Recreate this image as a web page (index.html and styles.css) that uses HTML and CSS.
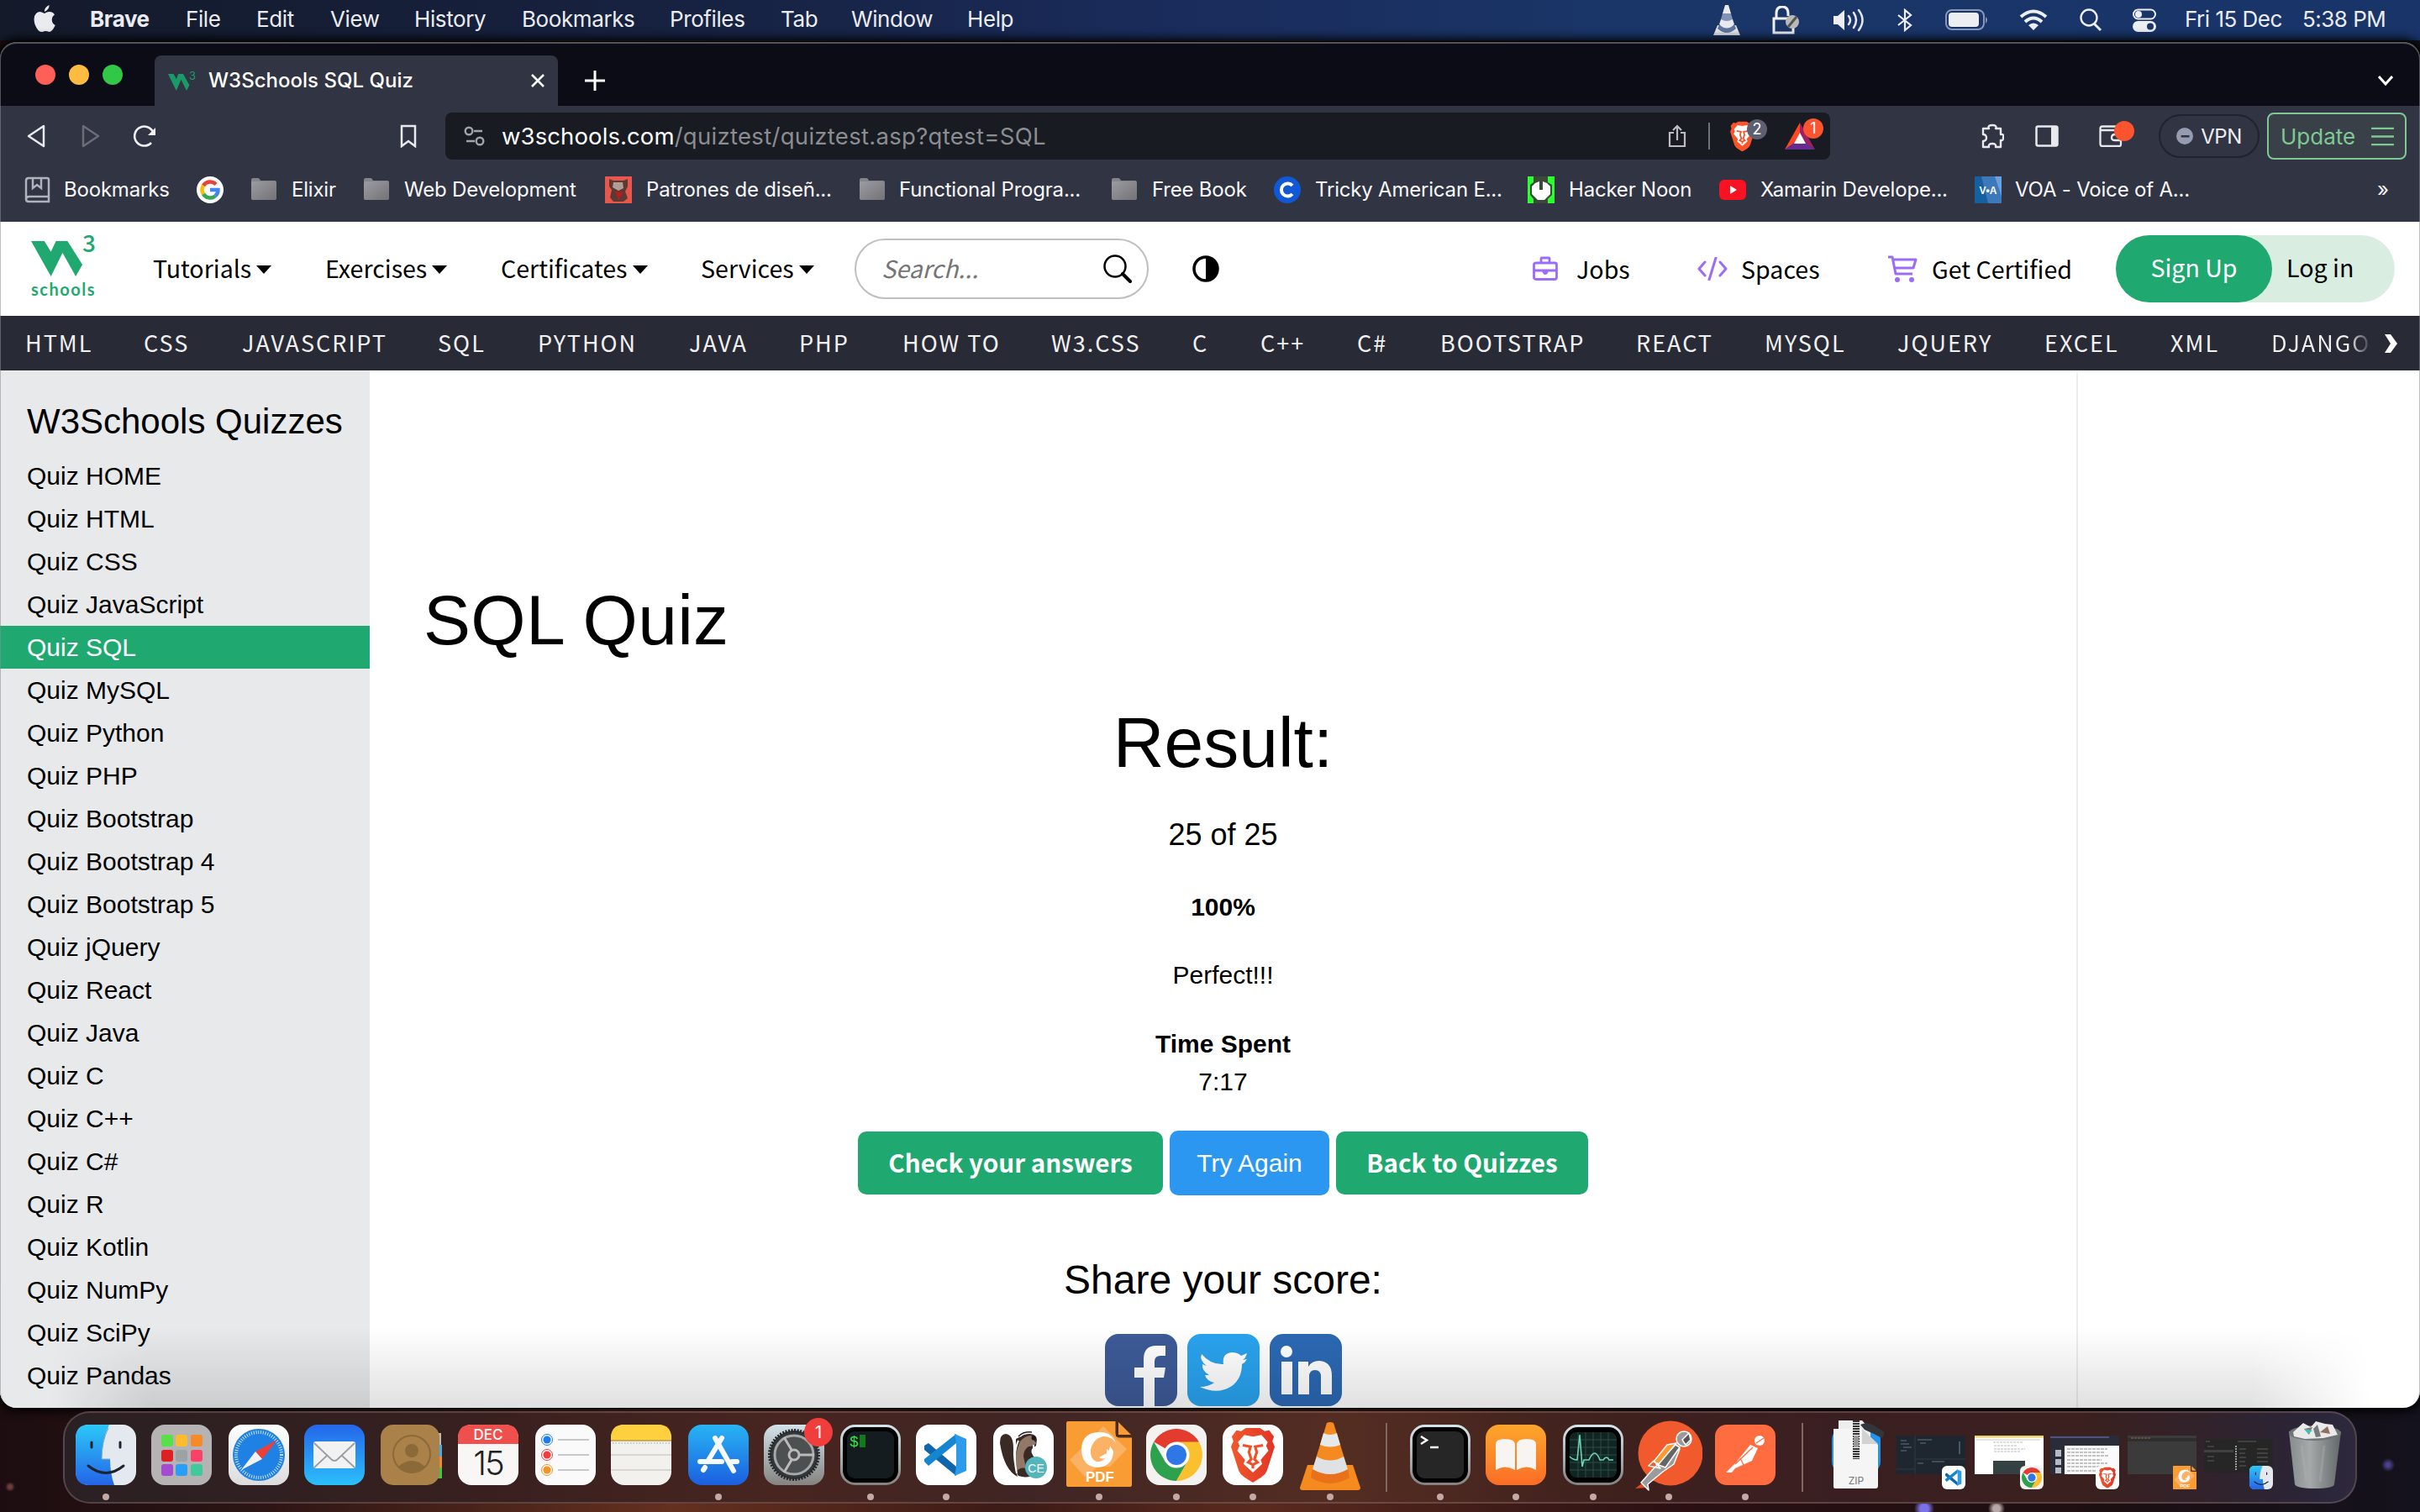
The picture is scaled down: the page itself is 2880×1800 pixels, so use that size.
FILE: index.html
```html
<!DOCTYPE html>
<html lang="en">
<head>
<meta charset="utf-8">
<title>W3Schools SQL Quiz</title>
<link rel="stylesheet" href="styles.css">
</head>
<body>
<svg class="defs" width="0" height="0" aria-hidden="true">
  <defs>
    <linearGradient id="gBlue" x1="0" y1="0" x2="0" y2="1"><stop offset="0" stop-color="#2bc8f7"/><stop offset="1" stop-color="#2464e8"/></linearGradient>
    <linearGradient id="gMail" x1="0" y1="0" x2="0" y2="1"><stop offset="0" stop-color="#2566ea"/><stop offset="1" stop-color="#2bc0fa"/></linearGradient>
    <linearGradient id="gStore" x1="0" y1="0" x2="0" y2="1"><stop offset="0" stop-color="#28b4f4"/><stop offset="1" stop-color="#1b5fe0"/></linearGradient>
    <linearGradient id="gOrange" x1="0" y1="0" x2="0" y2="1"><stop offset="0" stop-color="#fda62b"/><stop offset="1" stop-color="#fb6d27"/></linearGradient>
    <linearGradient id="gPaper" x1="0" y1="0" x2="0" y2="1"><stop offset="0" stop-color="#ffffff"/><stop offset="1" stop-color="#dcdcdc"/></linearGradient>
    <linearGradient id="gSteel" x1="0" y1="0" x2="0" y2="1"><stop offset="0" stop-color="#d3e3ea"/><stop offset="1" stop-color="#858380"/></linearGradient>
    <linearGradient id="gFolder" x1="0" y1="0" x2="1" y2="1"><stop offset="0" stop-color="#9b9ba3"/><stop offset="1" stop-color="#737375"/></linearGradient>
    <linearGradient id="gTrash" x1="0" y1="0" x2="1" y2="0"><stop offset="0" stop-color="#868b8c"/><stop offset=".4" stop-color="#a5a9aa"/><stop offset="1" stop-color="#626768"/></linearGradient>
    <linearGradient id="gLion" x1="0" y1="0" x2="1" y2="0"><stop offset="0" stop-color="#f0592c"/><stop offset="1" stop-color="#e33426"/></linearGradient>
    <symbol id="w3" viewBox="0 0 66 66"><path d="M0 0H16L24 20L30 0H44L62 44L54 66L38 22L24 66Z"/></symbol>
    <symbol id="folder" viewBox="0 0 32 28"><path d="M1 4V2Q1 0 3 0H9Q11 0 12 3H29Q31 3 31 6V23Q31 26 28 26H4Q1 26 1 23Z" fill="#858589"/><rect x="1" y="4" width="30" height="22" rx="2" fill="url(#gFolder)"/></symbol>
    <symbol id="lion" viewBox="0 0 60 70"><path d="M15 4L21 0H39L45 4L51 3L57 11L55 17L58 24L48 55Q46 60 41 63L30 70L19 63Q14 60 12 55L2 24L5 17L3 11L9 3Z"/><path d="M30 11L41 9L49 18L47 23L50 29L40 41L42 46L30 57L18 46L20 41L10 29L13 23L11 18L19 9Z" fill="#fff"/><path class="lion-face" d="M17 22L27 24L25 31L28 40L24 44L30 47L36 44L32 40L35 31L33 24L43 22M30 47V52" fill="none" stroke-width="3.4"/></symbol>
    <symbol id="finder" viewBox="0 0 72 72"><rect width="72" height="72" rx="16" fill="#e4e9f0"/><path d="M16 0H40Q31 18 31 41H41Q41 58 46 72H16Q0 72 0 56V16Q0 0 16 0Z" fill="url(#gBlue)"/><path d="M19 21V27M53 21V27M15 49Q36 66 57 49" fill="none" stroke="#1d2430" stroke-width="3" stroke-linecap="round"/><path d="M39 4Q31 20 31 41H41" fill="none" stroke="#7ba6cb" stroke-width="1"/></symbol>
    <symbol id="chrome" viewBox="0 0 72 72"><rect width="72" height="72" rx="16" fill="#f3f2f1"/><path d="M36 36L9.200000 20.500000A31 31 0 0 1 62.800000 20.500000Z" fill="#e33b2e"/><path d="M22.600000 43.700000L9.200000 20.500000A31 31 0 0 0 36 67L49.400000 43.700000Z" fill="#2da14d"/><path d="M49.400000 43.700000L36 67A31 31 0 0 0 62.800000 20.500000H36Z" fill="#fbc02d"/><circle cx="36" cy="36" r="15.500000" fill="#fff"/><circle cx="36" cy="36" r="12" fill="#2f76e6"/></symbol>
    <symbol id="brave" viewBox="0 0 72 72"><rect width="72" height="72" rx="16" fill="#fff"/><g fill="url(#gLion)"><use href="#lion" x="8" y="4" width="56" height="65"/></g></symbol>
    <symbol id="vscode" viewBox="0 0 72 72"><rect width="72" height="72" rx="16" fill="#fff"/><path d="M10 25L15 22L48 50V61L10 30Z" fill="#0f66ab"/><path d="M10 44L15 49L48 22V11L10 41Z" fill="#1486cf"/><path d="M46 11L60 17V55L46 61L48 50V22Z" fill="#2c9bec"/></symbol>
    <symbol id="pdf" viewBox="0 0 78 78"><path d="M2 0H59V18H78V76Q78 78 76 78H2Q0 78 0 76V2Q0 0 2 0Z" fill="#f99c33"/><path d="M62 1L77 16H62Z" fill="#f99c33"/><path d="M60 0V14Q60 18 64 18H78" fill="none" stroke="#4a2c1c" stroke-width="3"/><path d="M44 6L72 33L52 54H38L22 66L4 46Z" fill="#fbb264"/><path d="M59 26Q54 13 40 13Q18 13 18 34Q19 54 37 55Q55 54 56 36L52 29L51 35L48 33V38L39 43Q44 46 47 43Q43 49 36 48Q28 45 29 34Q31 22 43 18Q53 17 59 26Z" fill="#fff"/></symbol>
    <symbol id="cone" viewBox="0 0 72 82"><path d="M9 51H63L72 78Q72 81 69 81H3Q0 81 0 78Z" fill="#f58a1f"/><path d="M15 54H57L59 66Q36 80 13 66Z" fill="#e8711a"/><path d="M32 1Q36 -1 40 1L57 56Q36 66 15 56Z" fill="#f48a20"/><path d="M28 13Q36 17 44 13L48 27Q36 32 24 27Z" fill="#e6e8ea"/><path d="M20 41Q36 50 52 41L57 56Q36 68 15 56Z" fill="#dfe2e4"/></symbol>
  </defs>
</svg>

<header class="menubar">
  <svg class="apple" viewBox="0 0 26 32"><path d="M18.500 0Q19 5 13 8Q12.500 3 18.500 0ZM13 10Q17 7 21 8.300Q24 9.400 25 11.500Q21.500 14 21.800 18Q22 22 25.800 24Q22 32 18.500 32Q16 30.800 13.500 31Q11 32 9.500 32Q5 32 1.500 23Q-1 14 3 10Q6 7 9.500 8.500Z" fill="#eaebee"/></svg>
  <nav class="menus"><b>Brave</b><span>File</span><span>Edit</span><span>View</span><span>History</span><span>Bookmarks</span><span>Profiles</span><span>Tab</span><span>Window</span><span>Help</span></nav>
  <div class="status">
    <svg viewBox="0 0 32 38"><path d="M5 25H27L32 37H0Z M14 1H18L21 11H11Z M9 18H23L25 24Q16 32 7 24Z" fill="#e8eaf0"/><path d="M11 11H21L23 18Q16 22 9 18Z" fill="#8393b4"/><path d="M7 24Q16 33 25 24L27 29Q16 39 5 29Z" fill="#5f749f"/></svg>
    <svg viewBox="0 0 34 34"><path d="M6 15V9Q6 1 13 1Q20 1 20 9V12M3 15H26V32H3Z" fill="none" stroke="#eef0f4" stroke-width="3"/><circle cx="25" cy="19" r="8" fill="#b9b9b9"/><path d="M20 25L30 13" stroke="#555" stroke-width="3"/></svg>
    <svg viewBox="0 0 38 28"><path d="M1 9H6L14 2V26L6 19H1Z" fill="#eceef2"/><path d="M19 9Q23 14 19 19M25 5Q31 14 25 23M31 2Q40 14 31 26" fill="none" stroke="#e4e7ee" stroke-width="2.500" stroke-linecap="round"/></svg>
    <svg viewBox="0 0 20 28"><path d="M2 8L17 20L10 26V2L17 8L2 20" fill="none" stroke="#eceef2" stroke-width="2.200"/></svg>
    <svg viewBox="0 0 52 26"><rect x="1" y="1" width="45" height="23" rx="7" fill="none" stroke="#8798bb" stroke-width="2"/><rect x="4" y="4" width="36" height="17" rx="4" fill="#eceef2"/><path d="M48 9Q52 12 48 17Z" fill="#8798bb"/></svg>
    <svg viewBox="0 0 34 26"><path d="M2 9Q17 -4 32 9M7 15Q17 6 27 15" fill="none" stroke="#eceef2" stroke-width="4"/><path d="M11 19Q17 14 23 19L17 25Z" fill="#eceef2"/></svg>
    <svg viewBox="0 0 28 28"><circle cx="12" cy="11" r="9.500" fill="none" stroke="#eceef2" stroke-width="2.400"/><path d="M18 18L26 26" stroke="#eceef2" stroke-width="3"/></svg>
    <svg viewBox="0 0 30 28"><rect x="2" y="1.500" width="26" height="11" rx="5.500" fill="none" stroke="#eceef2" stroke-width="2"/><circle cx="8" cy="7" r="4" fill="#eceef2"/><rect x="1" y="15" width="28" height="13" rx="6.500" fill="#eceef2"/><circle cx="22" cy="21.500" r="4" fill="#1a3568"/></svg>
    <span>Fri 15 Dec</span><span>5:38 PM</span>
  </div>
</header>

<main class="window">
  <div class="tabstrip">
    <div class="lights"><i class="red"></i><i class="amber"></i><i class="green"></i></div>
    <div class="tab">
      <span class="favicon"><svg viewBox="0 0 66 66" preserveAspectRatio="none"><use href="#w3"/></svg><sup>3</sup></span>
      <span class="tab-title">W3Schools SQL Quiz</span>
      <svg class="tab-close" viewBox="0 0 16 16"><path d="M1 1L15 15M15 1L1 15" stroke="#fff" stroke-width="2.500"/></svg>
    </div>
    <svg class="newtab" viewBox="0 0 24 24"><path d="M12 0V24M0 12H24" stroke="#fff" stroke-width="3"/></svg>
    <svg class="tabsearch" viewBox="0 0 18 12"><path d="M1 1L9 10L17 1" fill="none" stroke="#fff" stroke-width="3"/></svg>
  </div>

  <div class="toolbar">
    <svg class="nav-back" viewBox="0 0 22 28"><path d="M20 2V26L2 14Z" fill="none" stroke="#e8e9ee" stroke-width="2.500" stroke-linejoin="round"/></svg>
    <svg class="nav-forward" viewBox="0 0 22 28"><path d="M2 2V26L20 14Z" fill="none" stroke="#6b6c78" stroke-width="2.500" stroke-linejoin="round"/></svg>
    <svg class="nav-reload" viewBox="0 0 28 28"><path d="M24 9A11.500 11.500 0 1 0 22 22" fill="none" stroke="#f0f0f3" stroke-width="2.600"/><path d="M27 4V13H18Z" fill="#f0f0f3"/></svg>
    <svg class="bookmark" viewBox="0 0 20 28"><path d="M2 2H18V26L10 20L2 26Z" fill="none" stroke="#e8e9ee" stroke-width="2.500"/></svg>
    <div class="urlbar">
      <svg class="tune" viewBox="0 0 26 24"><g fill="none" stroke="#a1a3aa" stroke-width="2.400"><circle cx="6" cy="6" r="4.300"/><path d="M12 6H22M3 18H13"/><circle cx="19" cy="18" r="4.300"/></g></svg>
      <span class="url">w3schools.com<em>/quiztest/quiztest.asp?qtest=SQL</em></span>
      <svg class="share" viewBox="0 0 22 28"><path d="M7 10H2V26H20V10H15M11 19V2M6 7L11 2L16 7" fill="none" stroke="#bcbdc2" stroke-width="2.200"/></svg>
      <i class="sep"></i>
      <span class="shield"><svg viewBox="0 0 60 70" fill="#fb542b"><use href="#lion"/></svg><i class="badge grey">2</i></span>
      <span class="bat"><svg viewBox="0 0 36 32"><path d="M18 0L0 32L12 24L18 13Z" fill="#ff4724"/><path d="M18 0L36 32L24 24L18 13Z" fill="#9e1f63"/><path d="M0 32H36L25 24H11Z" fill="#662d91"/><path d="M18 12L25 25H11Z" fill="#fff"/></svg><i class="badge">1</i></span>
    </div>
    <svg class="puzzle" viewBox="0 0 28 30"><path d="M3 6H10Q8 2 14 2Q20 2 18 6H24V13Q28 12 27 17Q27 21 24 20V28H18Q19 24 14 24Q9 24 10 28H3V21Q7 21 7 17Q7 13 3 13Z" fill="none" stroke="#e8e9ee" stroke-width="2.400" stroke-linejoin="round"/></svg>
    <svg class="panel" viewBox="0 0 28 26"><rect x="1.500" y="1.500" width="25" height="23" rx="2" fill="none" stroke="#e8e9ee" stroke-width="2.500"/><path d="M19 1H27V25H19Z" fill="#e8e9ee"/></svg>
    <span class="wallet"><svg viewBox="0 0 28 26"><path d="M26 6V23Q26 25 24 25H4Q1.500 25 1.500 22V4Q1.500 1.500 4 1.500H24M2 6H26M26 11H19Q15 11 15 15Q15 18 19 18H26" fill="none" stroke="#e8e9ee" stroke-width="2.300"/></svg><i></i></span>
    <span class="vpn"><i>−</i>VPN</span>
    <span class="update">Update<svg viewBox="0 0 28 24"><path d="M0 2H28M0 12H28M0 22H28" stroke="#7fc895" stroke-width="2.500"/></svg></span>
  </div>

  <div class="bookmarks">
    <svg class="bm-icon" viewBox="0 0 32 32"><path d="M5 2H27Q29 2 29 4V24H6Q2 24 2 28V5Q2 2 5 2ZM29 24V30H5Q2 30 2 27M10 2V14L15 10L20 14V2" fill="none" stroke="#b0b2bd" stroke-width="2.500"/></svg><span>Bookmarks</span>
    <svg class="bm-icon" viewBox="0 0 32 32"><circle cx="16" cy="16" r="16" fill="#fff"/><g fill="none" stroke-width="4.500"><path d="M23 9.500A9.500 9.500 0 0 0 8 11" stroke="#ea4335"/><path d="M8 11A9.500 9.500 0 0 0 8 21" stroke="#fbbc05"/><path d="M8 21A9.500 9.500 0 0 0 22 23.500" stroke="#34a853"/><path d="M22 23.500A9 9 0 0 0 25.500 16H16" stroke="#4285f4"/></g></svg><span></span>
    <svg class="bm-folder"><use href="#folder"/></svg><span>Elixir</span>
    <svg class="bm-folder"><use href="#folder"/></svg><span>Web Development</span>
    <svg class="bm-icon" viewBox="0 0 32 32"><rect width="32" height="32" fill="#e8574b"/><path d="M5 3L10 5H22L27 3V12L24 18L27 26L22 30H10L6 25L8 16L5 12Z" fill="#5d3934"/><path d="M10 7H21L22 14L16 17L9 13Z" fill="#b19d94"/><path d="M12 18L16 28L22 19Z" fill="#b51e20"/></svg><span>Patrones de diseñ...</span>
    <svg class="bm-folder"><use href="#folder"/></svg><span>Functional Progra...</span>
    <svg class="bm-folder"><use href="#folder"/></svg><span>Free Book</span>
    <svg class="bm-icon" viewBox="0 0 32 32"><circle cx="16" cy="16" r="16" fill="#1158d6"/><path d="M22 11A7.500 7.500 0 1 0 22 21" fill="none" stroke="#fff" stroke-width="4"/></svg><span>Tricky American E...</span>
    <svg class="bm-icon" viewBox="0 0 32 32"><rect width="32" height="32" fill="#2cff2f"/><path d="M7 0H24V7L29 10V22L24 27V32H7V27L3 22V10L7 7Z" fill="#3b4a38"/><path d="M9 8L14 6V16H18V6L23 8L27 12V21L20 28H12L5 21V12Z" fill="#fff"/></svg><span>Hacker Noon</span>
    <svg class="bm-icon" viewBox="0 0 32 32"><rect y="4" width="32" height="24" rx="6" fill="#f91222"/><path d="M13 11L21 16L13 21Z" fill="#fff"/></svg><span>Xamarin Develope...</span>
    <svg class="bm-icon" viewBox="0 0 32 32"><path d="M0 0H32V32H0Z" fill="#3d78bb"/><path d="M0 0H8L16 32H0Z" fill="#15609f"/><path d="M24 0H32V24Z" fill="#6ba0dd"/><text x="16" y="21" text-anchor="middle" class="voa">V•A</text></svg><span>VOA - Voice of A...</span>
    <span>»</span>
  </div>

  <div class="site-head">
    <div class="logo"><svg viewBox="0 0 66 66" preserveAspectRatio="none"><use href="#w3"/></svg><sup>3</sup><span>schools</span></div>
    <nav class="site-menus"><span>Tutorials<i></i></span><span>Exercises<i></i></span><span>Certificates<i></i></span><span>Services<i></i></span></nav>
    <div class="search"><span>Search...</span><svg viewBox="0 0 34 34"><circle cx="14" cy="14" r="12.500" fill="none" stroke="#000" stroke-width="2.500"/><path d="M23 23L32 32" stroke="#000" stroke-width="4" stroke-linecap="round"/></svg></div>
    <svg class="contrast" viewBox="0 0 32 32"><circle cx="16" cy="16" r="14" fill="#fff" stroke="#000" stroke-width="3.500"/><path d="M16 2A14 14 0 0 1 16 30Z"/></svg>
    <span class="site-link jobs"><svg viewBox="0 0 30 30"><path d="M10 7V3Q10 2 11 2H19Q20 2 20 3V7M4 8H26Q28.500 8 28.500 10V25Q28.500 27.500 26 27.500H4Q1.500 27.500 1.500 25V10Q1.500 8 4 8ZM2 17H28" fill="none" stroke="#9c6cf7" stroke-width="2.800"/><path d="M11 17H19Q18 22 15 22Q12 22 11 17Z" fill="#9c6cf7"/></svg>Jobs</span>
    <span class="site-link spaces"><svg viewBox="0 0 36 28"><path d="M9 6L2 14L9 22M27 6L34 14L27 22M22 1L14 27" fill="none" stroke="#9c6cf7" stroke-width="3" stroke-linecap="round" stroke-linejoin="round"/></svg>Spaces</span>
    <span class="site-link cert"><svg viewBox="0 0 36 32"><path d="M1 2H6L10 22H30M7 5H34L31 15H9" fill="none" stroke="#9c6cf7" stroke-width="3" stroke-linejoin="round"/><circle cx="12" cy="29" r="3" fill="#9c6cf7"/><circle cx="29" cy="29" r="3" fill="#9c6cf7"/></svg>Get Certified</span>
    <div class="auth"><span class="signup">Sign Up</span><span class="login">Log in</span></div>
  </div>

  <nav class="topics"><span>HTML</span><span>CSS</span><span>JAVASCRIPT</span><span>SQL</span><span>PYTHON</span><span>JAVA</span><span>PHP</span><span>HOW TO</span><span>W3.CSS</span><span>C</span><span>C++</span><span>C#</span><span>BOOTSTRAP</span><span>REACT</span><span>MYSQL</span><span>JQUERY</span><span>EXCEL</span><span>XML</span><span class="fade">DJANGO</span><svg viewBox="0 0 16 24"><path d="M0 1H7L15 12L7 23H0L7 12Z" fill="#fff"/></svg></nav>

  <div class="page">
    <aside class="sidebar">
      <h2>W3Schools Quizzes</h2>
      <a>Quiz HOME</a><a>Quiz HTML</a><a>Quiz CSS</a><a>Quiz JavaScript</a><a class="active">Quiz SQL</a><a>Quiz MySQL</a><a>Quiz Python</a><a>Quiz PHP</a><a>Quiz Bootstrap</a><a>Quiz Bootstrap 4</a><a>Quiz Bootstrap 5</a><a>Quiz jQuery</a><a>Quiz React</a><a>Quiz Java</a><a>Quiz C</a><a>Quiz C++</a><a>Quiz C#</a><a>Quiz R</a><a>Quiz Kotlin</a><a>Quiz NumPy</a><a>Quiz SciPy</a><a>Quiz Pandas</a>
    </aside>
    <section class="content">
      <h1>SQL Quiz</h1>
      <div class="result">
        <h1>Result:</h1>
        <p class="score">25 of 25</p>
        <p class="percent"><b>100%</b></p>
        <p class="remark">Perfect!!!</p>
        <p class="time"><b>Time Spent</b><br>7:17</p>
        <div class="actions"><span class="btn check">Check your answers</span><span class="btn again">Try Again</span><span class="btn back">Back to Quizzes</span></div>
        <h3>Share your score:</h3>
        <div class="social">
          <svg viewBox="0 0 86 86"><rect width="86" height="86" rx="16" fill="#3e5b98"/><path d="M46 86V52H35V40H46V30Q46 14 61 14H72V26H66Q59 26 59 33V40H72L70 52H59V86Z" fill="#fff"/></svg>
          <svg viewBox="0 0 86 86"><rect width="86" height="86" rx="16" fill="#2aa3ef"/><path d="M17 24Q28 37 43 36Q41 23 53 22Q60 22 64 26L71 23Q70 28 66 31L71 30Q69 34 65 36Q65 53 53 62Q36 73 15 63Q25 63 32 58Q23 56 21 49H26Q17 44 18 36L23 38Q14 31 17 24Z" fill="#fff"/></svg>
          <svg viewBox="0 0 86 86"><rect width="86" height="86" rx="16" fill="#2c69b3"/><circle cx="20" cy="21" r="7" fill="#fff"/><path d="M14 33H27V72H14ZM34 33H46V39Q50 32 59 32Q74 33 74 50V72H61V51Q61 43 54 43Q47 43 47 51V72H34Z" fill="#fff"/></svg>
        </div>
      </div>
    </section>
    <aside class="rail"></aside>
  </div>
</main>

<footer class="dock">
  <span class="app run"><svg viewBox="0 0 72 72"><use href="#finder"/></svg></span>
  <span class="app"><svg viewBox="0 0 72 72"><rect width="72" height="72" rx="16" fill="#b6b3b5"/><g><rect x="12" y="12" width="14" height="14" rx="3" fill="#59df48"/><rect x="29" y="12" width="14" height="14" rx="3" fill="#fbbd2d"/><rect x="47" y="12" width="14" height="14" rx="3" fill="#f68a26"/><rect x="12" y="30" width="14" height="14" rx="3" fill="#dd2123"/><rect x="29" y="30" width="14" height="14" rx="3" fill="#9ba3a5"/><rect x="47" y="30" width="14" height="14" rx="3" fill="#fb4264"/><rect x="12" y="47" width="14" height="14" rx="3" fill="#a44bd1"/><rect x="29" y="47" width="14" height="14" rx="3" fill="#279ff6"/><rect x="47" y="47" width="14" height="14" rx="3" fill="#40ca9c"/></g></svg></span>
  <span class="app"><svg viewBox="0 0 72 72"><rect width="72" height="72" rx="16" fill="url(#gPaper)"/><circle cx="36" cy="36" r="31" fill="#2081e4"/><circle cx="36" cy="36" r="27" fill="none" stroke="#c9e5fb" stroke-width="4" stroke-dasharray="1 1.800"/><path d="M58 18L40 41L32 32Z" fill="#ed3f3a"/><path d="M15 54L32 32L40 41Z" fill="#f2f2f2"/></svg></span>
  <span class="app"><svg viewBox="0 0 72 72"><rect width="72" height="72" rx="16" fill="url(#gMail)"/><rect x="11" y="20" width="50" height="32" rx="3" fill="#f2f2f2"/><path d="M12 51L28 36M60 51L44 36M12 22L32 41Q36 45 40 41L60 22" fill="none" stroke="#9a9fa6" stroke-width="1.800"/></svg></span>
  <span class="app"><svg viewBox="0 0 76 72"><path d="M68 10H72V24H68Z" fill="#b9b9b9"/><path d="M68 24H73V38H68Z" fill="#4aa9e0"/><path d="M68 38H73V51H68Z" fill="#f3892b"/><path d="M68 51H73V64H68Z" fill="#45c34d"/><rect width="70" height="72" rx="15" fill="#aa8149"/><circle cx="37" cy="35" r="22" fill="none" stroke="#8b6939" stroke-width="2"/><circle cx="37" cy="31" r="8" fill="#8b6939"/><path d="M21 50Q37 36 53 50Q37 64 21 50Z" fill="#8b6939"/></svg></span>
  <span class="app"><svg viewBox="0 0 72 72"><rect width="72" height="72" rx="16" fill="#f8f7f6"/><path d="M0 23V16Q0 0 16 0H56Q72 0 72 16V23Z" fill="#f0504d"/><text x="36" y="18" text-anchor="middle" class="cal-month">DEC</text><text x="36" y="60" text-anchor="middle" class="cal-day">15</text></svg></span>
  <span class="app"><svg viewBox="0 0 72 72"><rect width="72" height="72" rx="16" fill="#fbfafa"/><path d="M27 18H64M27 36H64M27 54H64" stroke="#b8b8ba" stroke-width="1.500"/><circle cx="14" cy="18" r="4.500" fill="#1b7bf4"/><circle cx="14" cy="18" r="6.500" fill="none" stroke="#1b7bf4"/><circle cx="14" cy="36" r="4.500" fill="#f43c3d"/><circle cx="14" cy="36" r="6.500" fill="none" stroke="#f43c3d"/><circle cx="14" cy="54" r="4.500" fill="#f79225"/><circle cx="14" cy="54" r="6.500" fill="none" stroke="#f79225"/></svg></span>
  <span class="app"><svg viewBox="0 0 72 72"><rect width="72" height="72" rx="16" fill="#f3f1ee"/><path d="M0 19V16Q0 0 16 0H56Q72 0 72 16V19Z" fill="#fecf3f"/><path d="M0 19H72" stroke="#b99a46" stroke-width="1.500"/><path d="M2 22H70" stroke="#bbb" stroke-width="1.500" stroke-dasharray="1.500 2"/><path d="M0 36H72M0 54H72" stroke="#cfcdca" stroke-width="1.500"/></svg></span>
  <span class="app run"><svg viewBox="0 0 72 72"><rect width="72" height="72" rx="16" fill="url(#gStore)"/><g stroke="#f6f9fd" stroke-width="6" stroke-linecap="round"><path d="M40 16L23 44M32 16L54 55M14 44H40M52 44H58M20 51L18 54"/></g></svg></span>
  <span class="app"><svg viewBox="0 0 72 72"><rect width="72" height="72" rx="16" fill="url(#gSteel)"/><circle cx="36" cy="36" r="29" fill="#34383a" stroke="#24282a" stroke-width="4" stroke-dasharray="2 1.500"/><circle cx="36" cy="36" r="23" fill="#4c5051" stroke="#a5a9aa" stroke-width="3"/><circle cx="36" cy="36" r="6" fill="none" stroke="#bbb" stroke-width="3"/><path d="M43 36H60M33 30L24 15M33 42L24 57" stroke="#bbb" stroke-width="3"/></svg><i class="count">1</i></span>
  <span class="app run"><svg viewBox="0 0 72 72"><rect x="1.500" y="1.500" width="69" height="69" rx="16" fill="#000" stroke="url(#gSteel)" stroke-width="3"/><rect x="8" y="8" width="56" height="56" rx="9" fill="#141c20"/><text x="11" y="26" class="prompt">$</text><path d="M23 12H30V27H23Z" fill="#117a1c"/></svg></span>
  <span class="app run"><svg viewBox="0 0 72 72"><use href="#vscode"/></svg></span>
  <span class="app"><svg viewBox="0 0 72 72"><rect width="72" height="72" rx="16" fill="#fff"/><path d="M8 22Q8 11 15 11Q24 12 24 28Q23 44 29 62Q13 54 8 22Z" fill="#3a2a26"/><path d="M27 17L31 15Q36 11 44 11Q52 12 52 18L51 25L46 29Q44 34 50 40V58Q42 65 30 61Q22 50 27 30Z" fill="#3a2a26"/><path d="M32 20Q38 13 45 13L48 18L51 22Q48 26 42 26Q36 30 36 38Q38 46 39 52Q32 50 27 56Q24 38 32 20Z" fill="#927867"/><path d="M30 19Q23 34 28 58M32 14Q38 8 46 10M48 24V29" fill="none" stroke="#fff" stroke-width="2"/><path d="M30 14Q36 8 46 9" fill="none" stroke="#222" stroke-width="1.500"/><circle cx="48" cy="16" r="2.500" fill="#191717"/><circle cx="51" cy="51" r="13" fill="#55b5bd"/><text x="51" y="56.500" text-anchor="middle" class="ce">CE</text></svg></span>
  <span class="app tall run"><svg viewBox="0 0 78 78"><use href="#pdf"/><text x="40" y="72" text-anchor="middle" class="pdf-text">PDF</text></svg></span>
  <span class="app run"><svg viewBox="0 0 72 72"><use href="#chrome"/></svg></span>
  <span class="app run"><svg viewBox="0 0 72 72"><use href="#brave"/></svg></span>
  <span class="app vlc run"><svg viewBox="0 0 72 82"><use href="#cone"/></svg></span>
  <i class="split"></i>
  <span class="app run"><svg viewBox="0 0 72 72"><rect x="1.500" y="1.500" width="69" height="69" rx="16" fill="#000" stroke="url(#gSteel)" stroke-width="3"/><rect x="8" y="8" width="56" height="56" rx="9" fill="#262626"/><path d="M13 14L20 18.500L13 23" fill="none" stroke="#fff" stroke-width="2.500"/><path d="M24 27H34" stroke="#fff" stroke-width="2.500"/></svg></span>
  <span class="app run"><svg viewBox="0 0 72 72"><rect width="72" height="72" rx="16" fill="url(#gOrange)"/><path d="M12 23Q12 17 23 17Q34 17 35 23V54Q23 47 12 54ZM37 23Q38 17 49 17Q60 17 60 23V54Q49 47 37 54Z" fill="#f7f4f1"/></svg></span>
  <span class="app run"><svg viewBox="0 0 72 72"><rect x="1.500" y="1.500" width="69" height="69" rx="16" fill="#000" stroke="url(#gSteel)" stroke-width="3"/><rect x="8" y="9" width="56" height="54" rx="8" fill="#112523"/><path d="M8 18H64M8 27H64M8 36H64M8 45H64M8 54H64M18 9V63M27 9V63M36 9V63M45 9V63M54 9V63" stroke="#2c4f49" stroke-width="1"/><path d="M8 38Q12 42 17 42L20 12L23 50L25 42H31Q38 26 44 42H48Q52 36 55 42H60" fill="none" stroke="#6cd5b5" stroke-width="1.600"/></svg></span>
  <span class="app postman run"><svg viewBox="0 0 80 84"><circle cx="42" cy="39" r="38.500" fill="#f15a2c"/><path d="M0 81L9 74L14 80Z" fill="#e04a1f"/><g stroke="#fff" stroke-width="1.500" stroke-linejoin="round"><path d="M48 28L53 34L46 52L33 61L15 76L16 83L7 74L23 56L36 45Z" fill="#9b9b9b"/><path d="M48 29L53 32L36 56L25 52Z" fill="#666"/><path d="M38 29L49 27L28 52L22 49Z" fill="#ff9a33"/><path d="M22 48L16 54L30 57Z" fill="none"/><circle cx="58" cy="22" r="9" fill="#9a9a9a"/><path d="M56 23L64 15L66 23L60 29Z" fill="#555"/></g></svg></span>
  <span class="app run"><svg viewBox="0 0 72 72"><rect width="72" height="72" rx="14" fill="#ff6c3f"/><circle cx="53" cy="19" r="6" fill="#fff"/><path d="M42 24L51 28L44 43L24 52L20 57L13 57L25 45Z" fill="#fff"/><path d="M24 47L45 27M30 40L34 48M49 22L58 16" stroke="#ff6c3f" stroke-width="1.300"/></svg></span>
  <i class="split"></i>
  <span class="app zip"><svg viewBox="0 0 64 82"><rect x="0" y="9" width="58" height="54" rx="14" fill="#2393ef"/><path d="M8 0H36L46 11V30H8Z" fill="#eee"/><path d="M2 10H36L55 29V78Q55 81 52 81H4Q2 81 2 79Z" fill="#f5f5f5"/><path d="M36 10V28H55Z" fill="#d2d2d2"/><path d="M29 0V46" stroke="#333" stroke-width="8" stroke-dasharray="2 1"/><rect x="26" y="18" width="6" height="14" fill="#999"/><path d="M34 5Q42 1 50 6L63 14L60 21L50 16L39 11Z" fill="#33363b"/><text x="29" y="76" text-anchor="middle" class="zip-text">ZIP</text></svg></span>
  <span class="thumb editor"><svg class="shot" viewBox="0 0 82 46"><rect width="82" height="46" fill="#1e2630"/><path d="M22 0V46M0 40H22M22 28H82" stroke="#2f3b46"/><path d="M5 6H12M5 10H15M8 14H18M5 18H12M25 5H42M28 9H35M25 33H32M42 31H57" stroke="#5f7280"/><path d="M75 7V22" stroke="#465865" stroke-width="2"/></svg><svg class="mini" viewBox="0 0 72 72"><use href="#vscode"/></svg></span>
  <span class="thumb"><svg class="shot" viewBox="0 0 82 46"><rect width="82" height="46" fill="#fff"/><path d="M0 1H82" stroke="#ead169" stroke-width="3"/><path d="M2 5H78" stroke="#c9c9c9"/><path d="M22 8H58M23 12H50M23 16H60M23 19H55" stroke="#bbb" stroke-dasharray="3 1"/><path d="M22 30H60V46H22Z" fill="#354043"/></svg><svg class="mini" viewBox="0 0 72 72"><use href="#chrome"/></svg></span>
  <span class="thumb"><svg class="shot" viewBox="0 0 82 46"><rect width="82" height="46" fill="#2a2d38"/><path d="M0 2H70" stroke="#55517d" stroke-width="2"/><path d="M17 12H82V46H17Z" fill="#fafafa"/><path d="M6 17H13V25H6ZM6 28H13V35H6ZM6 38H13V45H6Z" fill="#b5bac4"/><path d="M20 16H68M20 20H64M20 24H69M20 29H61M20 33H68M20 37H69M20 42H55" stroke="#8b8b8b" stroke-dasharray="4 1"/></svg><svg class="mini" viewBox="0 0 72 72"><use href="#brave"/></svg></span>
  <span class="thumb"><svg class="shot" viewBox="0 0 82 46"><rect width="82" height="46" fill="#3b3b3b"/><path d="M0 5H82" stroke="#302e2d" stroke-width="4"/><path d="M4 3H27" stroke="#8b694e" stroke-dasharray="3 1"/></svg><svg class="mini" viewBox="0 0 78 78"><use href="#pdf"/><text x="40" y="72" text-anchor="middle" class="pdf-text">PDF</text></svg></span>
  <span class="thumb"><svg class="shot" viewBox="0 0 82 46"><rect y="4" width="82" height="40" fill="#252625"/><path d="M0 17H35V20H0Z" fill="#414141"/><path d="M2 7H7M40 7H62M4 13H12M4 25H12M4 30H12" stroke="#585858"/><path d="M38 12V42" stroke="#9a9a9a" stroke-width="2" stroke-dasharray="2 1"/><path d="M42 16H50M42 21H49M42 26H50M42 31H49M42 36H50M63 16H76M63 21H76M63 26H76M63 31H76" stroke="#5e5e5e"/></svg><svg class="mini" viewBox="0 0 72 72"><use href="#finder"/></svg></span>
  <span class="app trash"><svg viewBox="0 0 64 82"><path d="M1 13L8 76Q10 81 32 81Q54 81 55 76L63 13Z" fill="url(#gTrash)"/><ellipse cx="32" cy="15" rx="31" ry="9" fill="#6f7475"/><path d="M6 14L18 3L27 8L33 1L44 4L53 5L59 17L42 21L20 22L7 19Z" fill="#eaeaea"/><path d="M19 10L29 8L25 17ZM38 14L47 7L50 16Z" fill="#8e7160"/><path d="M19 10L29 12L24 16Z" fill="#38c5c0"/><path d="M30 10L35 5L39 19L33 20Z" fill="#77797b"/><path d="M16 30L22 72M43 30L38 73" stroke="#b2b5b5" stroke-width="3" opacity=".35"/></svg></span>
</footer>
</body>
</html>
```
FILE: styles.css
```css
* { box-sizing: border-box; }
body {
  margin: 0;
  width: 2880px;
  height: 1800px;
  overflow: hidden;
  display: flex;
  flex-direction: column;
  font-family: Inter, "Liberation Sans", sans-serif;
  background:
    radial-gradient(circle at 2842px 1744px, #4d438e 0 2px, transparent 8px),
    radial-gradient(circle at 2290px 1796px, #7a72e8 0 5px, transparent 12px),
    radial-gradient(circle at 2376px 1796px, #b8a8a8 0 4px, transparent 10px),
    radial-gradient(circle at 12px 1770px, #6b3d3c 0 2px, transparent 6px),
    linear-gradient(90deg, #1d0d10 0, #2b1414 300px, #64301f 800px, #3c1a16 1200px, #5a2a1e 1500px, #2a1013 2000px, #1c0f12 2500px, #14121d 2880px);
}
svg { display: block; flex: none; }
i, em { font-style: normal; }
.defs { position: absolute; }

/* system menu bar */
.menubar {
  height: 48px;
  flex: none;
  display: flex;
  align-items: center;
  padding: 0 38px 0 40px;
  color: #ebecf0;
  font-size: 26px;
  background: linear-gradient(90deg, #141a2a 0, #172344 900px, #1a2b5a 1350px, #1a3568 1900px, #193468 2880px);
}
.apple { width: 26px; height: 32px; margin: -4px 41px 0 0; }
.menus {
  display: grid;
  grid-template-columns: 114px 84px 88px 100px 128px 176px 132px 84px 138px auto;
  white-space: nowrap;
  letter-spacing: -.4px;
  padding-bottom: 3px;
}
.status { margin-left: auto; display: flex; align-items: center; white-space: nowrap; letter-spacing: -.5px; }
.status span { padding-bottom: 3px; }
.status svg:nth-child(1) { width: 32px; height: 38px; margin-right: 37px; }
.status svg:nth-child(2) { width: 34px; height: 34px; margin-right: 39px; }
.status svg:nth-child(3) { width: 38px; height: 28px; margin-right: 38px; }
.status svg:nth-child(4) { width: 20px; height: 28px; margin-right: 38px; }
.status svg:nth-child(5) { width: 52px; height: 26px; margin-right: 36px; }
.status svg:nth-child(6) { width: 34px; height: 26px; margin-right: 37px; }
.status svg:nth-child(7) { width: 28px; height: 28px; margin-right: 35px; }
.status svg:nth-child(8) { width: 30px; height: 28px; margin-right: 33px; }
.status span:nth-of-type(1) { width: 140px; }
.status span:nth-of-type(2) { width: 102px; }

/* browser window */
.window {
  margin-top: 2px;
  height: 1626px;
  flex: none;
  display: flex;
  flex-direction: column;
  position: relative;
  border-radius: 20px;
  overflow: hidden;
  background: #fff;
  box-shadow: 0 0 0 1px #000, 0 0 12px 4px #000;
}
.window::before {
  content: "";
  position: absolute;
  inset: 0;
  z-index: 3;
  border-radius: 20px;
  border: 1px solid rgba(140, 142, 152, .55);
  border-top-width: 2px;
  border-bottom: 0;
}
.window::after {
  content: "";
  position: absolute;
  z-index: 2;
  left: 60px;
  right: 60px;
  bottom: 0;
  height: 96px;
  background: linear-gradient(rgba(0, 0, 0, 0), rgba(0, 0, 0, .12));
  mask-image: linear-gradient(90deg, transparent, #000 120px, #000 2620px, transparent);
}
.tabstrip { height: 76px; flex: none; display: flex; align-items: center; background: #0b0c15; padding-left: 42px; }
.lights { display: flex; gap: 16px; width: 142px; margin-top: 2px; }
.lights i { width: 24px; height: 24px; border-radius: 50%; }
.red { background: #fe5f57; }
.amber { background: #fdbb41; }
.green { background: #33c748; }
.tab {
  width: 480px;
  height: 60px;
  margin-top: 16px;
  display: flex;
  align-items: center;
  padding: 0 16px;
  border-radius: 8px 8px 0 0;
  background: #313442;
  color: #fff;
  font-size: 24px;
}
.favicon { width: 33px; display: flex; color: #1a9a67; margin-right: 15px; }
.favicon svg { width: 27px; height: 20px; fill: #1a9a67; margin-top: 3px; }
.favicon sup { font-size: 13px; line-height: 10px; margin-left: -2px; }
.tab-title { white-space: nowrap; font-weight: 500; letter-spacing: .02px; padding-bottom: 2px; }
.tab-close { width: 16px; height: 16px; margin-left: auto; }
.newtab { width: 24px; height: 24px; margin: 16px 0 0 32px; }
.tabsearch { width: 18px; height: 12px; margin: 16px 32px 0 auto; }

.toolbar { height: 72px; flex: none; display: flex; align-items: center; background: #313442; padding: 0 16px 0 32px; }
.nav-back, .nav-forward { width: 22px; height: 28px; }
.nav-forward { margin-left: 43px; }
.nav-reload { width: 28px; height: 28px; margin-left: 39px; }
.bookmark { width: 20px; height: 28px; margin-left: 290px; }
.urlbar {
  width: 1648px;
  height: 56px;
  margin-left: 34px;
  display: flex;
  align-items: center;
  padding: 0 18px 0 22px;
  border-radius: 8px;
  background: #181b21;
}
.tune { width: 26px; height: 24px; margin-right: 19px; }
.url { color: #fff; font-size: 27.500px; white-space: nowrap; letter-spacing: .1px; padding-bottom: 1px; }
.url em { color: #8b8d91; letter-spacing: .3px; }
.share { width: 22px; height: 28px; margin-left: auto; }
.sep { width: 2px; height: 32px; background: #707279; margin: 0 23px 0 26px; }
.shield { display: flex; width: 66px; position: relative; }
.shield svg { width: 31px; height: 37px; }
.lion-face { stroke: #f0512b; }
.bat { display: flex; width: 36px; position: relative; }
.bat svg { width: 36px; height: 32px; }
.badge {
  position: absolute;
  left: 22px;
  top: -5px;
  width: 24px;
  height: 24px;
  border-radius: 12px;
  background: #fb542f;
  color: #fff;
  font-size: 18px;
  line-height: 24px;
  text-align: center;
}
.badge.grey { left: 21px; top: -2px; background: #5d6070; }
.puzzle { width: 28px; height: 30px; margin-left: 179px; }
.panel { width: 28px; height: 26px; margin-left: 37px; }
.wallet { display: flex; position: relative; margin-left: 48px; }
.wallet svg { width: 28px; height: 26px; }
.wallet i { position: absolute; left: 18px; top: -5px; width: 24px; height: 24px; border-radius: 50%; background: #fb542f; }
.vpn {
  width: 120px;
  height: 52px;
  margin-left: 43px;
  display: flex;
  align-items: center;
  justify-content: center;
  gap: 9px;
  border: 2px solid #20222c;
  border-radius: 26px;
  color: #eeeef2;
  font-size: 24px;
  letter-spacing: -.5px;
}
.vpn i { width: 20px; height: 20px; border-radius: 50%; background: #979bb0; color: #313442; font-weight: 700; font-size: 20px; line-height: 19px; text-align: center; }
.update {
  width: 166px;
  height: 56px;
  margin-left: auto;
  display: flex;
  align-items: center;
  justify-content: space-between;
  padding: 0 13px 0 14px;
  border: 2px solid #7fc895;
  border-radius: 8px;
  background: #394048;
  color: #7fc895;
  font-size: 26px;
}
.update svg { width: 27px; height: 23px; }

.bookmarks {
  height: 66px;
  flex: none;
  display: grid;
  grid-template-columns: 47px 158px 32px 32px 49px 85px 49px 239px 49px 253px 48px 252px 49px 145px 49px 253px 49px 179px 49px 255px 48px 431px auto;
  align-items: center;
  justify-content: start;
  background: #313442;
  color: #f7f7f9;
  padding: 0 0 11px 29px;
  font-size: 24px;
  letter-spacing: -.2px;
  white-space: nowrap;
}
.bm-icon { width: 32px; height: 32px; }
.bm-folder { width: 32px; height: 28px; }
.voa { font: 700 12px "Liberation Sans", sans-serif; fill: #fff; letter-spacing: 0; }

/* site header */
.site-head {
  height: 112px;
  flex: none;
  display: flex;
  align-items: center;
  padding: 0 30px 0 37px;
  background: #fff;
  color: #000;
  font: 28.600px/40px "Noto Sans CJK SC", sans-serif;
  white-space: nowrap;
}
.logo {
  width: 80px;
  height: 80px;
  display: grid;
  grid-template-columns: 65px 15px;
  grid-template-rows: 49px 31px;
  color: #1fa971;
}
.logo svg { width: 65px; height: 42px; fill: #1fa971; align-self: end; }
.logo sup { font: 500 28px/18px "Noto Sans CJK SC", sans-serif; margin: -1px 0 0 -4px; }
.logo span { font: 700 20px/31px Lato, sans-serif; letter-spacing: 1.500px; }
.site-menus { display: grid; grid-template-columns: 205px 209px 238px 182px; margin: -3px 0 0 65px; }
.site-menus span { display: flex; align-items: center; gap: 6px; }
.site-menus i { border: 9px solid transparent; border-top: 10px solid #000; border-bottom: 0; margin-top: 5px; }
.search {
  width: 350px;
  height: 72px;
  display: flex;
  align-items: center;
  justify-content: space-between;
  padding: 0 18px 0 30px;
  border: 2px solid #bfbfbf;
  border-radius: 36px;
  color: #757575;
  margin-left: 1px;
}
.search span { font-style: italic; padding-bottom: 2px; }
.search svg { width: 34px; height: 34px; }
.contrast { width: 32px; height: 32px; margin-left: 52px; }
.site-link { display: flex; align-items: center; margin-top: -1px; }
.jobs { width: 196px; margin-left: 373px; }
.jobs svg { width: 30px; height: 30px; margin-right: 22px; }
.spaces { width: 226px; }
.spaces svg { width: 36px; height: 28px; margin-right: 16px; }
.cert { width: 271px; }
.cert svg { width: 36px; height: 32px; margin-right: 17px; }
.auth { display: flex; width: 332px; height: 80px; margin-left: 1px; border-radius: 40px; background: #d9eee1; line-height: 76px; }
.signup { width: 186px; border-radius: 40px; background: #1fa971; color: #fff; text-align: center; }
.login { padding-left: 17px; }

.topics {
  height: 65px;
  flex: none;
  display: grid;
  grid-template-columns: 141px 117px 233px 119px 180px 131px 123px 177px 168px 81px 115px 99px 233px 153px 158px 175px 150px 120px 135px 16px;
  align-items: center;
  padding-left: 30px;
  background: #282a35;
  color: #f1f1f1;
  font: 27px/61px "Noto Sans CJK SC", sans-serif;
  letter-spacing: 2px;
  white-space: nowrap;
}
.topics svg { width: 16px; height: 24px; }
.topics span { height: 63px; }
.fade { width: 118px; background: linear-gradient(90deg, #f1f1f1 92px, #44464f 116px); background-clip: text; color: transparent; }

/* page */
.page { flex: 1; min-height: 0; display: flex; overflow: hidden; font-family: "Liberation Sans", Arial, sans-serif; color: #000; }
.sidebar { width: 440px; background: #e7e9eb; font-size: 30px; line-height: 52px; overflow: hidden; }
.sidebar h2 { margin: 0; padding: 29px 0 8px 32px; font-size: 42px; font-weight: 400; line-height: 63px; white-space: nowrap; }
.sidebar a { display: block; height: 51px; padding-left: 32px; }
.sidebar .active { background: #1fa971; color: #fff; }
.content { width: 2031px; padding-top: 234px; }
.content h1 { margin: 0 0 20px 64px; font-size: 84px; font-weight: 400; line-height: 126px; letter-spacing: .3px; }
.result { text-align: center; font-size: 30px; line-height: 45px; }
.content .result h1 { margin: 0; letter-spacing: 0; }
.result p { margin: 0; }
.result .score { font-size: 36px; line-height: 54px; margin-top: 20px; }
.result .percent { margin-top: 36px; }
.result .remark { margin-top: 36px; }
.result .time { margin-top: 37px; }
.actions { display: flex; justify-content: center; align-items: center; gap: 8px; margin-top: 36px; }
.btn { height: 75px; border-radius: 10px; background: #1fa971; color: #fff; font: 700 29.600px/73px "Noto Sans CJK SC", sans-serif; white-space: nowrap; }
.check { width: 363px; }
.back { width: 300px; }
.again { width: 190px; height: 77px; background: #2c97f0; font: 30px/77px "Liberation Sans", sans-serif; }
.result h3 { margin: 65px 0 28px; font-size: 48px; font-weight: 400; line-height: 72px; }
.social { display: flex; justify-content: center; gap: 12px; }
.social svg { width: 86px; height: 86px; }
.rail { flex: 1; border-left: 2px solid #ededed; margin-top: 3px; }

/* dock */
.dock {
  width: 2730px;
  height: 110px;
  margin: 4px 0 0 75px;
  flex: none;
  display: grid;
  grid-template-columns: 90px 92px 90px 91px 92px 92px 90px 92px 90px 91px 90px 92px 87px 95px 91px 92px 102px 29px 90px 92px 89px 92px 103px 36px 77px 93px 90px 92px 91px 100px 64px;
  align-items: start;
  padding: 14px 0 0 13px;
  position: relative;
  border: 2px solid rgba(160, 130, 130, .35);
  border-radius: 32px;
  background: linear-gradient(90deg, #2a2023 0, #38201f 500px, #482520 850px, #3f2524 1150px, #542d22 1520px, #3e201d 1850px, #3a1f22 2100px, #3a201e 2400px, #2a2538 2680px, #2f293d 2730px);
}
.app { position: relative; width: 72px; height: 72px; }
.app > svg { width: 100%; height: 100%; }
.app:nth-child(5) { width: 76px; }
.tall { width: 78px; height: 78px; margin-top: -4px; }
.vlc { height: 82px; margin-top: -3px; }
.postman { width: 80px; height: 84px; margin: -5px 0 0 -3px; }
.zip, .trash { width: 64px; height: 82px; margin-top: -5px; }
.run::after {
  content: "";
  position: absolute;
  left: 50%;
  bottom: -18px;
  width: 8px;
  height: 8px;
  margin-left: -4px;
  border-radius: 50%;
  background: #c4a9a6;
}
.tall::after { bottom: -16px; }
.vlc::after { bottom: -11px; }
.postman::after { bottom: -11px; }
.count {
  position: absolute;
  left: 48px;
  top: -8px;
  width: 34px;
  height: 34px;
  border-radius: 50%;
  background: #f03e3d;
  color: #fff;
  font-size: 20px;
  line-height: 34px;
  text-align: center;
}
.split { width: 2px; height: 82px; margin-top: -2px; background: #806764; }
.thumb { position: relative; width: 82px; height: 46px; margin-top: 13px; }
.shot { width: 82px; height: 46px; }
.mini { position: absolute; left: 54px; top: 36px; width: 28px; height: 28px; }
.cal-month { font: 500 17px Inter, sans-serif; fill: #fff; }
.cal-day { font: 300 40px Inter, sans-serif; fill: #222; letter-spacing: -2px; }
.prompt { font: 18px "Liberation Mono", monospace; fill: #35e24a; }
.ce { font: 14px "Liberation Sans", sans-serif; fill: #fff; }
.pdf-text { font: 700 17px "Liberation Sans", sans-serif; fill: #fff; }
.zip-text { font: 12px Inter, sans-serif; fill: #777; }
```
